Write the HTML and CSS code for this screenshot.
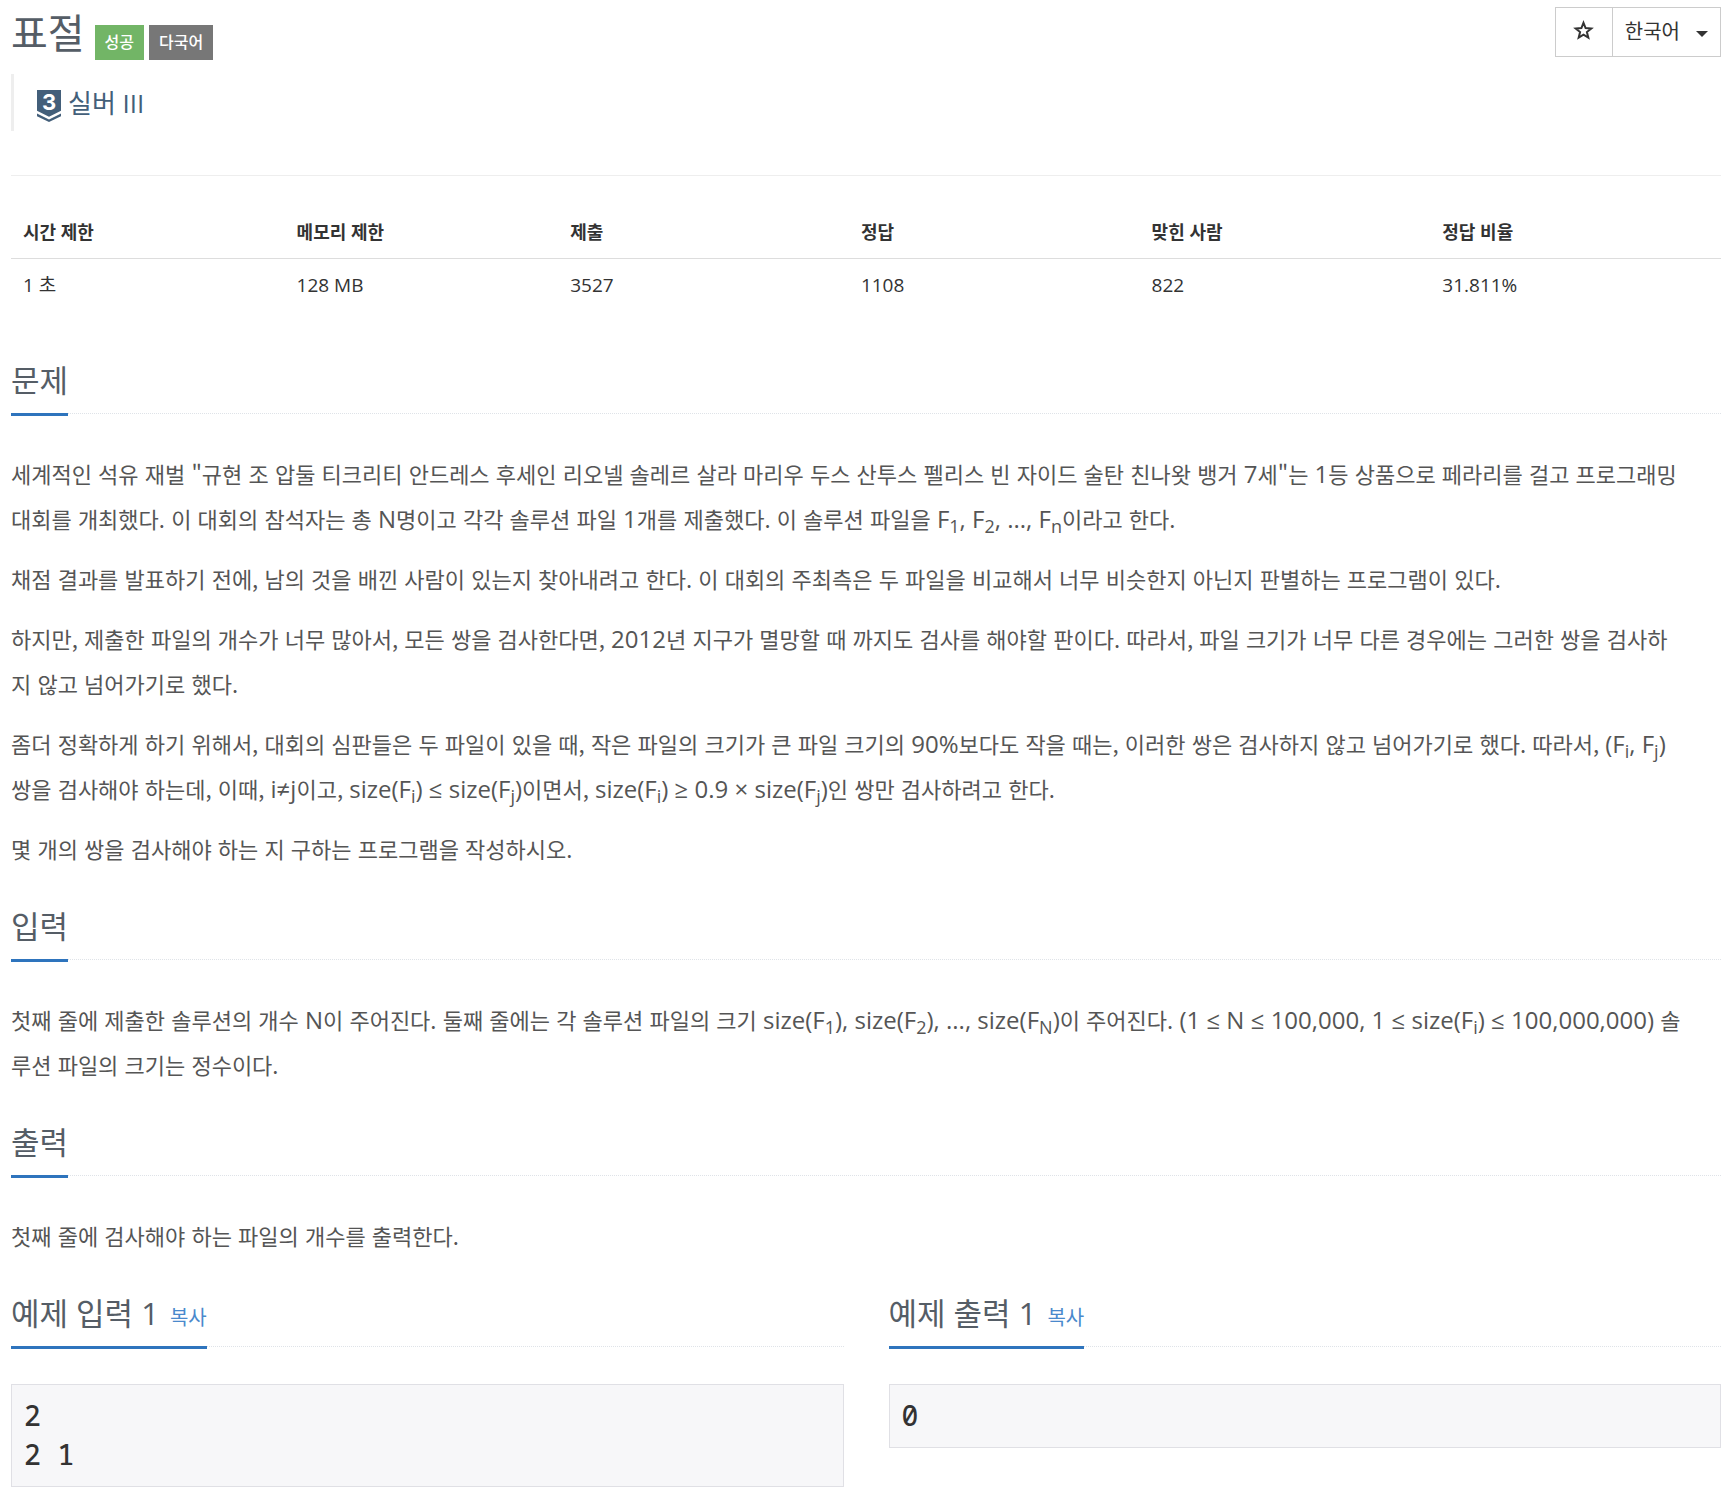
FILE: index.html
```html
<!DOCTYPE html>
<html lang="ko">
<head>
<meta charset="utf-8">
<title>표절</title>
<meta name="viewport" content="width=device-width, initial-scale=1">
<link rel="stylesheet" href="styles.css">
</head>
<body>
<main class="page">
  <header class="top">
    <div class="title-row">
      <h1 class="title">표절</h1>
      <span class="label label-success">성공</span>
      <span class="label label-muted">다국어</span>
    </div>
    <div class="actions">
      <button class="btn btn-star" type="button" aria-label="즐겨찾기">
        <svg class="star" viewBox="0 0 21 20" aria-hidden="true"><path d="M10.500 2.800L12.600 8.100L18.300 8.500L13.900 12.100L15.300 17.600L10.500 14.600L5.700 17.600L7.100 12.100L2.700 8.500L8.400 8.100Z"/></svg>
      </button>
      <button class="btn btn-lang" type="button">한국어<span class="caret"></span></button>
    </div>
  </header>

  <blockquote class="tier">
    <a class="tier-link" href="#tier">
      <svg class="tier-icon" viewBox="0 0 24 32" aria-hidden="true">
        <path fill="#435f7a" d="M0 0h24v20.700l-12 6-12-6z"/>
        <path fill="#435f7a" d="M0 23.500l12 6 12-6v2.700l-12 5.800-12-5.800z"/>
        <text class="tier-level" x="12" y="20">3</text>
      </svg>
      <span>실버 III</span>
    </a>
  </blockquote>

  <hr class="rule">

  <table class="info">
    <thead>
      <tr><th class="narrow">시간 제한</th><th class="narrow">메모리 제한</th><th>제출</th><th>정답</th><th>맞힌 사람</th><th>정답 비율</th></tr>
    </thead>
    <tbody>
      <tr><td>1 초</td><td>128 MB</td><td>3527</td><td>1108</td><td>822</td><td>31.811%</td></tr>
    </tbody>
  </table>

  <section class="section">
    <div class="headline"><h2>문제</h2></div>
    <div class="text">
      <p>세계적인 석유 재벌 "규현 조 압둘 티크리티 안드레스 후세인 리오넬 솔레르 살라 마리우 두스 산투스 펠리스 빈 자이드 술탄 친나왓 뱅거 <span class="math">7</span>세"는 <span class="math">1</span>등 상품으로 페라리를 걸고 프로그래밍<br>대회를 개최했다. 이 대회의 참석자는 총 <span class="math">N</span>명이고 각각 솔루션 파일 <span class="math">1</span>개를 제출했다. 이 솔루션 파일을 <span class="math">F<sub>1</sub>, F<sub>2</sub>, ..., F<sub>n</sub></span>이라고 한다.</p>
      <p>채점 결과를 발표하기 전에, 남의 것을 배낀 사람이 있는지 찾아내려고 한다. 이 대회의 주최측은 두 파일을 비교해서 너무 비슷한지 아닌지 판별하는 프로그램이 있다.</p>
      <p>하지만, 제출한 파일의 개수가 너무 많아서, 모든 쌍을 검사한다면, <span class="math">2012</span>년 지구가 멸망할 때 까지도 검사를 해야할 판이다. 따라서, 파일 크기가 너무 다른 경우에는 그러한 쌍을 검사하<br>지 않고 넘어가기로 했다.</p>
      <p>좀더 정확하게 하기 위해서, 대회의 심판들은 두 파일이 있을 때, 작은 파일의 크기가 큰 파일 크기의 <span class="math">90%</span>보다도 작을 때는, 이러한 쌍은 검사하지 않고 넘어가기로 했다. 따라서, <span class="math">(F<sub>i</sub>, F<sub>j</sub>)</span><br>쌍을 검사해야 하는데, 이때, <span class="math">i≠j</span>이고, <span class="math">size(F<sub>i</sub>) ≤ size(F<sub>j</sub>)</span>이면서, <span class="math">size(F<sub>i</sub>) ≥ 0.9 × size(F<sub>j</sub>)</span>인 쌍만 검사하려고 한다.</p>
      <p>몇 개의 쌍을 검사해야 하는 지 구하는 프로그램을 작성하시오.</p>
    </div>
  </section>

  <section class="section">
    <div class="headline"><h2>입력</h2></div>
    <div class="text">
      <p>첫째 줄에 제출한 솔루션의 개수 <span class="math">N</span>이 주어진다. 둘째 줄에는 각 솔루션 파일의 크기 <span class="math">size(F<sub>1</sub>), size(F<sub>2</sub>), ..., size(F<sub>N</sub>)</span>이 주어진다. <span class="math">(1 ≤ N ≤ 100,000, 1 ≤ size(F<sub>i</sub>) ≤ 100,000,000)</span> 솔<br>루션 파일의 크기는 정수이다.</p>
    </div>
  </section>

  <section class="section">
    <div class="headline"><h2>출력</h2></div>
    <div class="text">
      <p>첫째 줄에 검사해야 하는 파일의 개수를 출력한다.</p>
    </div>
  </section>

  <div class="samples">
    <section class="section">
      <div class="headline"><h2>예제 입력 1 <button class="copy" type="button">복사</button></h2></div>
      <pre class="sample">2
2 1</pre>
    </section>
    <section class="section">
      <div class="headline"><h2>예제 출력 1 <button class="copy" type="button">복사</button></h2></div>
      <pre class="sample">0</pre>
    </section>
  </div>
</main>
</body>
</html>
```
FILE: styles.css
```css
* { box-sizing: border-box; }

body {
  margin: 0;
  background: #fff;
  color: #333;
  font-family: "Open Sans", "Noto Sans CJK KR", sans-serif;
  font-size: 18px;
  line-height: 28px;
}

h1, h2, p, pre, blockquote { margin: 0; }

.page { padding: 7px 15px 11px 11px; }

.top {
  display: flex;
  justify-content: space-between;
  align-items: flex-start;
}

.title-row {
  display: flex;
  align-items: flex-end;
  gap: 5px;
  height: 53px;
}

.title {
  margin-right: 5px;
  font-size: 40px;
  font-weight: 400;
  line-height: 54px;
  color: #555d66;
}

.label {
  padding: 0 10px;
  font-size: 16px;
  font-weight: 500;
  line-height: 35px;
  color: #fff;
}

.label-success { background: #72b566; }
.label-muted { background: #777; }

.actions { display: flex; }

.btn {
  display: flex;
  align-items: center;
  height: 50px;
  border: 1px solid #ccc;
  background: #fff;
  color: #333;
  font: inherit;
}

.btn-star { width: 58px; justify-content: center; padding: 0 1px 4px 0; }
.btn-lang { margin-left: -1px; padding: 0 12px; gap: 16px; font-size: 20px; }

.star {
  width: 21px;
  height: 20px;
  fill: none;
  stroke: #333;
  stroke-width: 2;
}

.caret {
  margin-top: 3px;
  border: 6px solid transparent;
  border-top-color: #333;
  border-bottom: 0;
}

.tier {
  margin-top: 14px;
  padding: 11px 23px 9px;
  border-left: 3px solid #eee;
}

.tier-link {
  display: flex;
  align-items: flex-end;
  gap: 7px;
  font-size: 26px;
  line-height: 37px;
  color: #435f7a;
  text-decoration: none;
}

.tier-icon { width: 24px; height: 32px; }

.tier-level {
  fill: #fff;
  font-family: Inter, "Open Sans", sans-serif;
  font-size: 22px;
  font-weight: 700;
  text-anchor: middle;
}

.rule {
  margin: 44px 0 30px;
  border: 0;
  border-top: 1px solid #eee;
}

.info {
  width: 100%;
  border-collapse: collapse;
  table-layout: fixed;
}

.info th, .info td {
  padding: 12px;
  text-align: left;
}

.info th { border-bottom: 1px solid #ddd; }
.info td { font-size: 19px; }
.info .narrow { width: 16%; }

.section { margin-top: 33px; }
.info + .section { margin-top: 47px; }

.headline {
  margin-bottom: 37px;
  border-bottom: 1px dotted #dfe3e8;
}

.headline h2 {
  width: fit-content;
  margin-bottom: -3px;
  padding-bottom: 11px;
  border-bottom: 3px solid #2e74bd;
  font-size: 31px;
  font-weight: 400;
  line-height: 44px;
  color: #555d66;
}

.text {
  display: grid;
  gap: 15px;
  font-family: "Noto Sans CJK KR", sans-serif;
  font-size: 22px;
  line-height: 45px;
  color: #555;
}

/* Numbers and formulas inside the Korean text. */
.math {
  font-family: "Open Sans", sans-serif;
  font-size: 24px;
  line-height: 24px;
}

sub {
  font-size: 18px;
  line-height: 18px;
  vertical-align: -5px;
}

.copy {
  margin-left: 3px;
  padding: 0;
  border: 0;
  background: none;
  color: #4a89cc;
  font: inherit;
  font-size: 20px;
  line-height: 20px;
}

.samples {
  display: grid;
  grid-template-columns: 1fr 1fr;
  gap: 45px;
}

.sample {
  padding: 11px 12px 12px;
  border: 1px solid #e0e0e5;
  background: #f7f7f9;
  color: #333;
  font-family: "Noto Sans Mono", "DejaVu Sans Mono", monospace;
  font-size: 28px;
  font-weight: 500;
  line-height: 39px;
}
```
